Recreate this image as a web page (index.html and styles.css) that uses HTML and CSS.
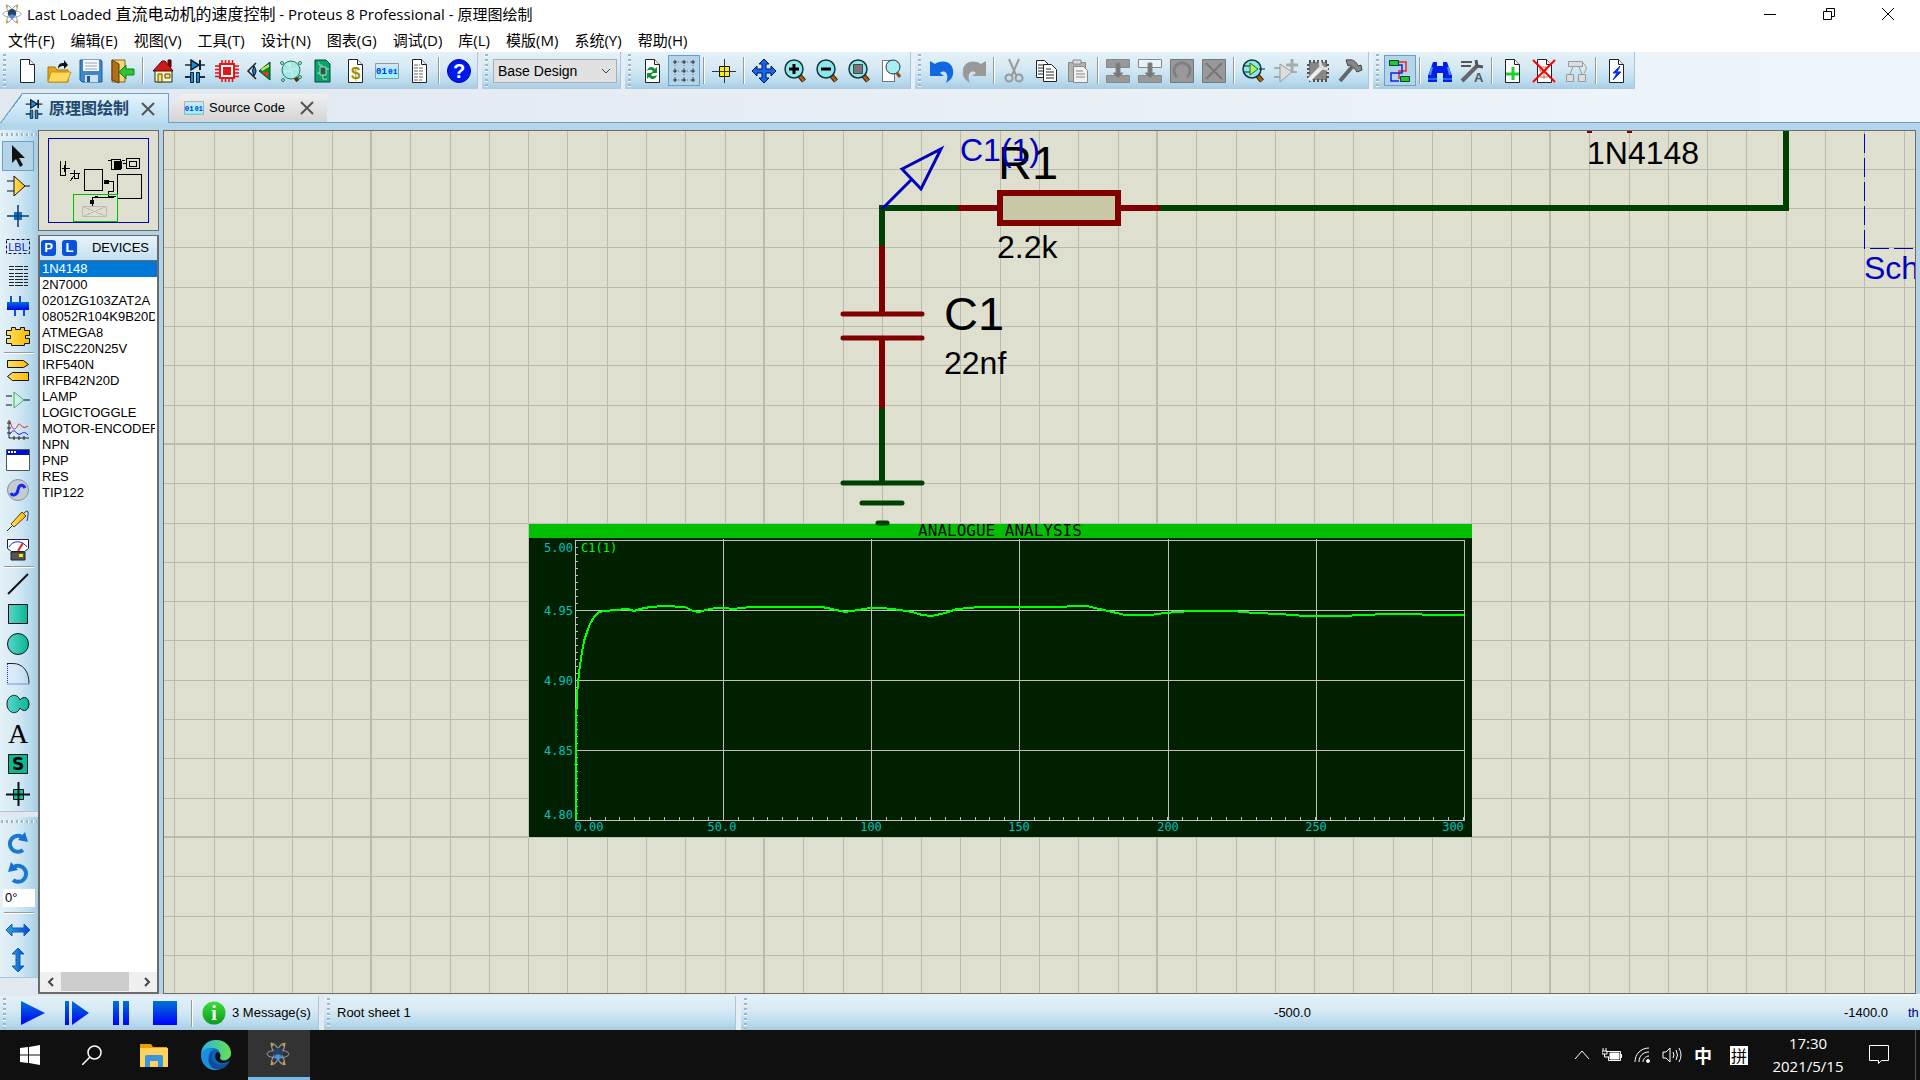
FILE: index.html
```html
<!DOCTYPE html>
<html lang="zh-CN">
<head>
<meta charset="utf-8">
<title>Last Loaded 直流电动机的速度控制 - Proteus 8 Professional - 原理图绘制</title>
<link rel="stylesheet" href="styles.css">
</head>
<body>
<svg class="defs" aria-hidden="true">
  <defs>
    <linearGradient id="blue" x1="0" x2="0" y1="0" y2="1"><stop offset="0" stop-color="#0074d0"/><stop offset="1" stop-color="#0000ff"/></linearGradient>
    <linearGradient id="blueH"><stop offset="0" stop-color="#2aa5e0"/><stop offset="1" stop-color="#0048e0"/></linearGradient>
    <linearGradient id="teal"><stop offset="0" stop-color="#5cd4cc"/><stop offset="1" stop-color="#04b894"/></linearGradient>
    <linearGradient id="gold"><stop offset="0" stop-color="#ffdf60"/><stop offset="1" stop-color="#ffb800"/></linearGradient>
    <linearGradient id="edgeGreen"><stop offset="0" stop-color="#24b4e8"/><stop offset="1" stop-color="#6be04e"/></linearGradient>
    <linearGradient id="info" x1="0" x2="0" y1="0" y2="1"><stop offset="0" stop-color="#3be03b"/><stop offset="1" stop-color="#0a9a1c"/></linearGradient>
    <symbol id="page" viewBox="0 0 24 24"><path d="M5.500 .5h9l5 5v18h-14z" fill="#fff" stroke="#222"/><path d="M14.500 .5v5h5" fill="#eee" stroke="#222"/></symbol>
    <symbol id="schem" viewBox="0 0 24 24"><path d="M2 6h20" stroke="#1a2e40" stroke-width="1.500"/><path d="M8 1v10l8-5z" fill="#1590e0" stroke="#10202c" stroke-width="1.500"/><path d="M17 1v10" stroke="#10202c" stroke-width="2"/><path d="M2 18h6M16 18h6" stroke="#1a2e40" stroke-width="2"/><path d="M7.500 13.500h3v10h-3zM13.500 13.500h3v10h-3z" fill="#1590e0" stroke="#10202c"/></symbol>
    <symbol id="code" viewBox="0 0 24 24"><path d="M.5 4.500h23v15H.5z" fill="#9af6fc" stroke="#8a9aa6"/><path d="M1 5h22v3H1z" fill="#d9e2ee"/><text x="1" y="15" class="bits">01</text><text x="13" y="15" class="bits small">01</text></symbol>
    <symbol id="mag" viewBox="0 0 24 24"><path d="M15 16l5 6" stroke="#2a1600" stroke-width="5"/><path d="M15 16l5 6" stroke="#b06010" stroke-width="3"/><circle cx="10" cy="10" r="9" fill="#8ce8ea" stroke="#16343a" stroke-width="1.500"/></symbol>
    <symbol id="atom" viewBox="0 0 24 24"><g fill="none" stroke="#8f9aa3" stroke-width="1"><ellipse cx="12" cy="12" rx="3" ry="12" transform="rotate(30 12 12)"/><ellipse cx="12" cy="12" rx="3" ry="12" transform="rotate(-30 12 12)"/><ellipse cx="12" cy="12" rx="11" ry="4"/></g><circle cx="12" cy="11" r="5" fill="#26425f"/><path d="M8 14l4 5 4-5-4-2z" fill="#4b8de8"/><path d="M5 1l2 3M19 1l-2 3M5 23l2-3M19 23l-2-3" stroke="#d59c3a" stroke-width="2"/></symbol>
    <symbol id="cross" viewBox="0 0 16 16"><path d="M2 2l12 12M14 2L2 14" stroke="#555" stroke-width="2"/></symbol>
    <symbol id="undo" viewBox="0 0 24 24"><path d="M0 2l5 3c8-5 17-2 18 6 1 6-2 10-7 13 2-5 2-9-1-11-2-1-4 0-5 1l4 3H0z"/></symbol>
    <symbol id="turn" viewBox="0 0 24 24"><path d="M17 19a8 8 0 1 1-1-13" fill="none" stroke="#1a78d0" stroke-width="4"/><path d="M19 1l3 10-10-2z" fill="#1670d8"/></symbol>
  </defs>
</svg>

<header class="titlebar">
  <svg class="app-icon"><use href="#atom"/></svg>
  <h1>Last Loaded <span class="han">直流电动机的速度控制</span> - Proteus 8 Professional - 原理图绘制</h1>
  <div class="win-buttons">
    <button aria-label="Minimize"><svg viewBox="0 0 12 12"><path d="M0 6.500h12"/></svg></button>
    <button aria-label="Restore"><svg viewBox="0 0 12 12"><path d="M.5 3.500h8v8h-8zM3.500 3V.5h8v8H9"/></svg></button>
    <button aria-label="Close"><svg viewBox="0 0 12 12"><path d="M0 0l12 12M12 0L0 12"/></svg></button>
  </div>
</header>

<nav class="menu">
  <button>文件(F)</button><button>编辑(E)</button><button>视图(V)</button><button>工具(T)</button><button>设计(N)</button><button>图表(G)</button><button>调试(D)</button><button>库(L)</button><button>模版(M)</button><button>系统(Y)</button><button>帮助(H)</button>
</nav>

<div class="toolbars">
  <div class="bar">
    <button aria-label="New"><svg><use href="#page"/></svg></button>
    <button aria-label="Open"><svg viewBox="0 0 24 24"><path d="M1 8h7l2 3h11v12H1z" fill="#e8a820" stroke="#a87400"/><path d="M4 13h20l-4 10H1z" fill="#ffd75a" stroke="#c89010"/><path d="M11 10c0-5 2-6 6-6V1l4 5-4 4V7c-3 0-4 0-6 3z" fill="#111"/></svg></button>
    <button aria-label="Save"><svg viewBox="0 0 24 24"><path d="M1 1h21l1 2v20H3l-2-2z" fill="#3f87c8" stroke="#1f5a94"/><path d="M4 1h16v11H4z" fill="#f4f8fa"/><path d="M6 4h12M6 7h12M6 10h12" stroke="#9ab"/><path d="M6 16h13v7H6z" fill="#cfe0ee"/><path d="M8 17h3v6H8z" fill="#1f5a94"/></svg></button>
    <button aria-label="Exit"><svg viewBox="0 0 24 24"><path d="M1 1h13v22H1z" fill="#f3d67c" stroke="#8a6010"/><path d="M1 1l7 4v19l-7-3z" fill="#b0701a" stroke="#5c3a08"/><path d="M8 13l7-7v4h8v6h-8v4z" fill="#2fc432" stroke="#158018"/></svg></button>
    <span class="sep"></span>
    <button aria-label="Home"><svg viewBox="0 0 24 24"><path d="M4 11h17v12H4z" fill="#fff8c0" stroke="#222"/><path d="M17 1h3v7h-3z" fill="#800" stroke="#400"/><path d="M2 12L11 2h3l8 10z" fill="#d01818" stroke="#600"/><path d="M7 15h4v8H7z" fill="#ffe838" stroke="#444"/><path d="M14 15h5v4h-5z" fill="#ffe838" stroke="#444"/></svg></button>
    <button aria-label="Schematic"><svg><use href="#schem"/></svg></button>
    <button aria-label="PCB layout"><svg viewBox="0 0 24 24"><path d="M7 1v22M10.500 1v22M14 1v22M17.500 1v22M0 7h24M0 10.500h24M0 14h24M0 17.500h24" stroke="#e01010" stroke-width="1.500"/><path d="M4 4h16v16H4z" fill="#e81818"/><path d="M6 6h12v12H6z" fill="#fff"/><path d="M8 8h8v8H8z" fill="#e01818"/></svg></button>
    <button aria-label="3D view"><svg viewBox="0 0 24 24"><path d="M9 4L1 12l8 8" fill="none" stroke="#222" stroke-width="1.500"/><path d="M7 7q4 5 0 10-3-5 0-10z" fill="#1480d0" stroke="#111"/><path d="M12 12L23 3v18z" fill="#0d8a30" stroke="#043"/><path d="M14 10l8-5v3l-7 4z" fill="#c8e840"/><path d="M15 13l6 5v-5z" fill="#f03020"/></svg></button>
    <button aria-label="Gerber"><svg viewBox="0 0 24 24"><path d="M15 17l4 5" stroke="#603008" stroke-width="4"/><circle cx="12" cy="11" r="9" fill="#a8e6e8" stroke="#168058"/><path d="M11 3v7h9M5 12h8v6M7 6h4" fill="none" stroke="#c8f4f4"/><g fill="none" stroke="#16845c"><circle cx="3" cy="4" r="1.500"/><circle cx="21" cy="4" r="1.500"/><circle cx="4" cy="21" r="1.500"/><circle cx="21" cy="18" r="1.500"/></g></svg></button>
    <button aria-label="Design explorer"><svg viewBox="0 0 24 24"><path d="M4 1h11l4 4v18H4z" fill="#08a468" stroke="#044"/><path d="M9 8h6v8H9zM8 3v3h3v2M16 20h-4v-4M15 10h3M6 14h3" fill="#2a584e" stroke="#9fe8c8"/></svg></button>
    <button aria-label="Bill of materials"><svg viewBox="0 0 24 24"><use href="#page"/><text x="8" y="20" class="dollar">$</text></svg></button>
    <button aria-label="Source code"><svg><use href="#code"/></svg></button>
    <button aria-label="Project notes"><svg viewBox="0 0 24 24"><use href="#page"/><path d="M7 6h6M7 9h10M7 12h10M7 15h10M7 18h10M7 21h8" stroke="#666" stroke-dasharray="4 1"/></svg></button>
    <span class="sep"></span>
    <button aria-label="Help"><svg viewBox="0 0 24 24"><circle cx="12" cy="12" r="11.500" fill="#0018f0" stroke="#0008a0"/><text x="12" y="19" class="help-mark">?</text></svg></button>
  </div>
  <div class="bar bar-combo">
    <select aria-label="Design variant"><option>Base Design</option></select>
  </div>
  <div class="bar">
    <button aria-label="Redraw"><svg viewBox="0 0 24 24"><use href="#page"/><path d="M7 12c1-5 6-5 8-2l2-2v6h-6l2-2c-2-2-4-1-6 0zM17 16c-1 5-6 5-8 2l-2 2v-6h6l-2 2c2 2 4 1 6 0z" fill="#0f9038"/></svg></button>
    <button class="on" aria-label="Grid"><svg viewBox="0 0 24 24"><path d="M3 3h18M3 12h18M3 21h18M3 3v18M12 3v18M21 3v18" stroke="#666" stroke-dasharray="1 2"/><path d="M1 3h4M10 3h4M19 3h4M1 12h4M10 12h4M19 12h4M1 21h4M10 21h4M19 21h4M3 1v4M3 10v4M3 19v4M12 1v4M12 10v4M12 19v4M21 1v4M21 10v4M21 19v4" stroke="#333"/></svg></button>
    <span class="sep"></span>
    <button aria-label="Origin"><svg viewBox="0 0 24 24"><path d="M7.500 7.500h10v10h-10z" fill="#ffee10" stroke="#111"/><path d="M12.500 0v24M0 12.500h24" stroke="#333"/></svg></button>
    <span class="sep"></span>
    <button aria-label="Pan"><svg viewBox="0 0 24 24"><path d="M12 0l5 5h-3v5h5V7l5 5-5 5v-3h-5v5h3l-5 5-5-5h3v-5H5v3l-5-5 5-5v3h5V5H7z" fill="#1068f0" stroke="#001450"/></svg></button>
    <button aria-label="Zoom in"><svg viewBox="0 0 24 24"><use href="#mag"/><path d="M10 5v10M5 10h10" stroke="#000" stroke-width="3"/></svg></button>
    <button aria-label="Zoom out"><svg viewBox="0 0 24 24"><use href="#mag"/><path d="M5 10h10" stroke="#000" stroke-width="3"/></svg></button>
    <button aria-label="Zoom all"><svg viewBox="0 0 24 24"><use href="#mag"/><path d="M5.500 5.500h9v9h-9z" fill="#777" stroke="#445"/></svg></button>
    <button aria-label="Zoom area"><svg viewBox="0 0 24 24"><path d="M2.500 1.500h12v21h-12z" fill="#fff" stroke="#000" stroke-dasharray="1 1"/><path d="M17 14l3 4" stroke="#8a4a10" stroke-width="3"/><circle cx="13" cy="8" r="7" fill="#a8eef0" stroke="#234"/></svg></button>
  </div>
  <div class="bar">
    <button aria-label="Undo"><svg fill="#1268e0"><use href="#undo"/></svg></button>
    <button aria-label="Redo"><svg class="flip" fill="#999"><use href="#undo"/></svg></button>
    <span class="sep"></span>
    <button aria-label="Cut"><svg viewBox="0 0 24 24" fill="none" stroke="#999"><path d="M7 0l7 16M17 0l-7 16" stroke-width="2"/><circle cx="7" cy="19" r="3.500" stroke-width="2"/><circle cx="17" cy="19" r="3.500" stroke-width="2"/></svg></button>
    <button aria-label="Copy"><svg viewBox="0 0 24 24" fill="#fff" stroke="#222"><path d="M2.500 1.500h8l4 4v13h-12z"/><path d="M4 6h5M4 9h6M4 12h6M4 15h6"/><path d="M9.500 5.500h8l5 5v12h-13z"/><path d="M12 10h5M12 13h8M12 16h8M12 19h8"/></svg></button>
    <button aria-label="Paste"><svg viewBox="0 0 24 24" stroke="#888"><path d="M2.500 3.500h17v19h-17z" fill="#b4b4b4"/><path d="M7 1h8v4H7z" fill="#ddd"/><path d="M7.500 7.500h10l4 4v12h-14z" fill="#f0f0f0"/><path d="M10 12h7M10 15h9M10 18h9"/></svg></button>
    <span class="sep"></span>
    <button aria-label="Block copy"><svg viewBox="0 0 24 24" fill="#999" stroke="#888"><path d="M.5.500h23v8H.5zM.5 16.500h23v7H.5z"/><path d="M10 4h4v10h3l-5 5-5-5h3z" fill="#777"/></svg></button>
    <button aria-label="Block move"><svg viewBox="0 0 24 24" fill="#999" stroke="#888"><path d="M.5.500h23v8H.5z" fill="#e8f2f8"/><path d="M.5 16.500h23v7H.5z"/><path d="M10 4h4v10h3l-5 5-5-5h3z" fill="#777"/></svg></button>
    <button aria-label="Block rotate"><svg viewBox="0 0 24 24"><path d="M.5.500h23v23H.5z" fill="#999" stroke="#777"/><path d="M7 18a8 8 0 1 1 10 0" fill="none" stroke="#808080" stroke-width="3"/></svg></button>
    <button aria-label="Block delete"><svg viewBox="0 0 24 24"><path d="M.5.500h23v23H.5z" fill="#999" stroke="#777"/><path d="M4 4l16 16M20 4L4 20" stroke="#777" stroke-width="2"/></svg></button>
    <span class="sep"></span>
    <button aria-label="Pick parts"><svg viewBox="0 0 24 24"><use href="#mag"/><path d="M1 7h7M1 13h7M17 10h6" stroke="#123"/><path d="M8 4v12l8-6z" fill="#b0f060" stroke="#187018"/></svg></button>
    <button aria-label="Make device"><svg viewBox="0 0 24 24"><path d="M0 9h6M0 18h6M18 13h5" stroke="#777"/><path d="M6 5v18l12-10z" fill="#ddd" stroke="#999"/><path d="M18 0v12M12 6h12" stroke="#aaa" stroke-width="3"/></svg></button>
    <button aria-label="Packaging tool"><svg viewBox="0 0 24 24"><path d="M3 3h18v18H3z" fill="#888" stroke="#555" stroke-width="4" stroke-dasharray="2 2"/><path d="M4 4h16v16H4z" fill="#888"/><path d="M3 21L17 7" stroke="#eee" stroke-width="4"/><path d="M14 2l1 7 7 1" fill="none" stroke="#ddd" stroke-width="3"/></svg></button>
    <button aria-label="Decompose"><svg viewBox="0 0 24 24"><path d="M2 22L14 8" stroke="#666" stroke-width="4"/><path d="M8 1c7-1 10 1 12 6l3-1 1 5-5 2-2-3-5-4-2 1z" fill="#888" stroke="#444"/></svg></button>
  </div>
  <div class="bar">
    <button class="on" aria-label="Wire autorouter"><svg viewBox="0 0 24 24" fill="none"><path d="M10 3h8v9h-7v8" stroke="#f02020" stroke-width="1.500"/><path d="M9 6h5v8H3v8h8" stroke="#1020f0" stroke-width="1.500"/><path d="M1.500 1.500h9v5h-9zM12.500 17.500h9v5h-9z" fill="#22c832" stroke="#043"/></svg></button>
    <span class="sep"></span>
    <button aria-label="Search"><svg viewBox="0 0 24 24"><path d="M5 3h4v4h6V3h4l5 14v6h-9v-9H9v9H0v-6z" fill="#0020e8"/><path d="M4 8l-2 8M20 8l2 8" stroke="#4c90ff" stroke-width="2"/><path d="M0 20h9M15 20h9" stroke="#40b8f8"/></svg></button>
    <button aria-label="Property assignment"><svg viewBox="0 0 24 24"><path d="M1 3h11M1 7h10" stroke="#555" stroke-width="2"/><path d="M2 22L18 6" stroke="#666" stroke-width="4"/><path d="M16 1l1 6 6 1" fill="none" stroke="#555" stroke-width="3"/><text x="14" y="23" class="letter-a">A</text></svg></button>
    <span class="sep"></span>
    <button aria-label="New sheet"><svg viewBox="0 0 24 24"><use href="#page"/><path d="M13 8v13M6 15h13" stroke="#20d030" stroke-width="3"/></svg></button>
    <button aria-label="Remove sheet"><svg viewBox="0 0 24 24"><use href="#page"/><path d="M8 8h6v4H8zM12 12v8M8 18h8" fill="none" stroke="#a87858"/><path d="M1 1l22 22M23 1L1 23" stroke="#f00" stroke-width="2"/></svg></button>
    <button aria-label="Exit to parent"><svg viewBox="0 0 24 24" fill="#ddd" stroke="#999"><path d="M4.500 2.500h14v5h-14zM2.500 15.500h7v7h-7zM14.500 15.500h7v7h-7z"/><path d="M9 8l-3 7M15 8l3 7M19 4c4 3 4 7 1 10" fill="none"/></svg></button>
    <span class="sep"></span>
    <button aria-label="Electrical check"><svg viewBox="0 0 24 24"><use href="#page"/><path d="M16 7l-7 7h4l-4 7 8-8h-4z" fill="#1030f0" stroke="#1030f0"/></svg></button>
  </div>
</div>

<div class="tabs">
  <div class="tab active"><svg class="tab-icon"><use href="#schem"/></svg><a href="#sheet">原理图绘制</a><button aria-label="Close tab"><svg><use href="#cross"/></svg></button></div>
  <div class="tab"><svg class="tab-icon"><use href="#code"/></svg><a href="#source">Source Code</a><button aria-label="Close tab"><svg><use href="#cross"/></svg></button></div>
</div>

<main class="work">
  <aside class="modes">
    <div class="mode-group">
      <button class="on" aria-label="Selection"><svg viewBox="0 0 24 24"><path d="M6 1v18l4-4 4 8 3-2-4-7h6z" fill="#111"/></svg></button>
      <button aria-label="Component"><svg viewBox="0 0 24 24"><path d="M1 7h8M1 17h8M18 12h6" stroke="#111"/><path d="M8 2v20l11-10z" fill="url(#gold)" stroke="#111"/></svg></button>
      <button aria-label="Junction"><svg viewBox="0 0 24 24"><path d="M8 8h8v8H8z" fill="#0874d8"/><path d="M12 1v22M1 12h22" stroke="#123c58" stroke-width="1.500"/></svg></button>
      <button aria-label="Wire label"><svg viewBox="0 0 24 24"><path d="M.5 5.500h23v14H.5z" fill="none" stroke="#111" stroke-dasharray="3 2"/><text x="12" y="17" class="lbl">LBL</text></svg></button>
      <button aria-label="Text script"><svg viewBox="0 0 24 24" shape-rendering="crispEdges"><path d="M3 2.500h19M3 5.500h19M3 9.500h19M3 12.500h19M3 15.500h19M3 18.500h19M3 21.500h19" stroke="#222" stroke-dasharray="5 1 8 1"/></svg></button>
      <button aria-label="Bus"><svg viewBox="0 0 24 24"><path d="M5 2v6M14 2v6M9 16v6M18 16v6" stroke="#0a50e0" stroke-width="2"/><path d="M1 8h22v8H1z" fill="url(#blue)"/></svg></button>
      <button aria-label="Subcircuit"><svg viewBox="0 0 24 24"><path d="M5.500 3.500h4v2h5v-2h4v3h5v5h-4v3h4v5h-5v2h-13v-2h-5v-5h4v-3h-4v-5h5z" fill="url(#gold)" stroke="#111"/></svg></button>
      <span class="rule"></span>
      <button aria-label="Terminals"><svg viewBox="0 0 24 24"><path d="M1.500 2.500h16l5 4-5 3h-16zM22.500 14.500h-16l-5 4 5 4h16z" fill="url(#gold)" stroke="#111"/></svg></button>
      <button aria-label="Device pins"><svg viewBox="0 0 24 24"><path d="M0 8h6M0 17h6M18 12h6" stroke="#111"/><path d="M8 4v16l10-8z" fill="none" stroke="#30c040"/></svg></button>
      <button aria-label="Graph"><svg viewBox="0 0 24 24" fill="none"><path d="M3 2v18h20M1 5h4M1 10h4M1 15h4M8 18v4M13 18v4M18 18v4" stroke="#222"/><path d="M4 3c3 12 6 8 8 4s4 6 10 1" stroke="#e02020"/><path d="M4 16c4-6 5-2 8 0s5-5 10 1" stroke="#1020f0"/></svg></button>
      <button aria-label="Active popup"><svg viewBox="0 0 24 24"><path d="M.5 1.500h23v21H.5z" fill="#fff" stroke="#555"/><path d="M1 2h22v5H1z" fill="#0010c8"/><path d="M2 4h8" stroke="#fff" stroke-width="2" stroke-dasharray="2 1"/></svg></button>
      <button aria-label="Generator"><svg viewBox="0 0 24 24"><circle cx="12" cy="12" r="10.500" fill="#c4ccd2" stroke="#8a9298"/><path d="M5 15c1 3 6 3 7-3s5-6 7-2" fill="none" stroke="#1428f0" stroke-width="3"/></svg></button>
      <button aria-label="Probe"><svg viewBox="0 0 24 24"><path d="M1 23l5-5" stroke="#222"/><path d="M5 16L16 4l4 4L8 19z" fill="url(#gold)" stroke="#554010"/><path d="M18 5c6-6 4 3 3 8" fill="none" stroke="#333"/></svg></button>
      <button aria-label="Instruments"><svg viewBox="0 0 24 24"><path d="M1.500 1.500h21v9l-4 3h-13l-4-3z" fill="#fff" stroke="#222"/><path d="M3 9c4-7 13-7 18 0" fill="none" stroke="#1020f0"/><path d="M12 13l5-8" stroke="#e02020" stroke-width="2"/><path d="M5 14h14v8H5z" fill="#555" stroke="#222"/><path d="M13 16h4v3h-4z" fill="#f8e020"/></svg></button>
      <span class="rule"></span>
      <button aria-label="Line"><svg viewBox="0 0 24 24"><path d="M2 22L22 2" stroke="#111" stroke-width="2"/></svg></button>
      <button aria-label="Box"><svg viewBox="0 0 24 24"><path d="M2.500 2.500h19v19h-19z" fill="url(#teal)" stroke="#111"/></svg></button>
      <button aria-label="Circle"><svg viewBox="0 0 24 24"><circle cx="12" cy="12" r="10.500" fill="url(#teal)" stroke="#111"/></svg></button>
      <button aria-label="Arc"><svg viewBox="0 0 24 24" fill="none"><path d="M1.500 2v20H23" stroke="#2030e0" stroke-dasharray="1 1"/><path d="M1 1.500h6c10 0 16 8 16 20" stroke="#222"/></svg></button>
      <button aria-label="Path"><svg viewBox="0 0 24 24"><path d="M14 8c4-5 9-2 9 4s-5 9-9 4c-3 8-13 5-13-4s10-12 13-4z" fill="url(#teal)" stroke="#111"/></svg></button>
      <button aria-label="Text"><svg viewBox="0 0 24 24"><text x="12" y="21" class="big-a">A</text></svg></button>
      <button aria-label="Symbol"><svg viewBox="0 0 24 24"><path d="M2.500 2.500h19v19h-19z" fill="#08b890" stroke="#111"/><text x="12" y="18" class="big-s">S</text></svg></button>
      <button aria-label="Marker"><svg viewBox="0 0 24 24"><path d="M7.500 7.500h10v10h-10z" fill="#10c098" stroke="#111"/><path d="M12.500 0v24M0 12.500h24" stroke="#111" stroke-width="2"/></svg></button>
    </div>
    <div class="mode-group">
      <button aria-label="Rotate clockwise"><svg><use href="#turn"/></svg></button>
      <button aria-label="Rotate anticlockwise"><svg class="flip"><use href="#turn"/></svg></button>
      <input class="angle" aria-label="Angle" value="0°">
      <span class="rule"></span>
      <button aria-label="Mirror horizontally"><svg viewBox="0 0 24 24"><path d="M0 12l6-6v4h12V6l6 6-6 6v-4H6v4z" fill="url(#blueH)" stroke="#1860a0"/></svg></button>
      <button aria-label="Mirror vertically"><svg viewBox="0 0 24 24"><path d="M12 0l6 6h-4v12h4l-6 6-6-6h4V6H6z" fill="url(#blueH)" stroke="#1860a0"/></svg></button>
    </div>
  </aside>

  <aside class="side">
    <div class="overview">
      <svg viewBox="39 131 119 99" fill="none" shape-rendering="crispEdges">
        <path d="M48.500 138.500h100v84h-100z" stroke="#0000c0"/>
        <g stroke="#000">
          <path d="M84.500 169.500h18v21h-18zM117 174h24v24h-24zM126.500 158.500h13v10h-13zM129.500 161.500h7v5h-7zM111.500 159.500h9v10h-9z"/>
          <path d="M114 161h7v7h-7zM104 180h4v3h-4zM90 200h3v3h-3z" fill="#000"/>
          <path d="M60.500 161v14h5v-14M62 168h8M64 165v7M70 173h10M74 170v8h4v-4M70 181l4-5M108 160h3M122 160h3M123 163h3M108 181h5v10h-5v5h8M92 206v-9h22M95 196h3"/>
        </g>
        <path d="M82.500 206.500h24v10h-24zl24 10m0-10l-24 10" stroke="#bbb"/>
        <path d="M73.500 194.500h44v27h-44z" stroke="#00c000"/>
      </svg>
    </div>
    <section class="devices">
      <div class="devices-head"><button>P</button><button>L</button><h2>DEVICES</h2></div>
      <ul>
        <li class="selected">1N4148</li><li>2N7000</li><li>0201ZG103ZAT2A</li><li>08052R104K9B20D</li><li>ATMEGA8</li><li>DISC220N25V</li><li>IRF540N</li><li>IRFB42N20D</li><li>LAMP</li><li>LOGICTOGGLE</li><li>MOTOR-ENCODER</li><li>NPN</li><li>PNP</li><li>RES</li><li>TIP122</li>
      </ul>
      <div class="scroll">
        <button aria-label="Scroll left"><svg viewBox="0 0 8 12"><path d="M6 2L2 6l4 4"/></svg></button>
        <span class="track"><span class="thumb"></span></span>
        <button aria-label="Scroll right"><svg viewBox="0 0 8 12"><path d="M2 2l4 4-4 4"/></svg></button>
      </div>
    </section>
  </aside>

  <section class="sheet" id="sheet">
    <svg class="drawing">
      <defs>
        <pattern id="grid" x="764" y="444" width="393" height="393" patternUnits="userSpaceOnUse">
          <path d="M39 0h1v393h-1zM79 0h1v393h-1zM118 0h1v393h-1zM157 0h1v393h-1zM196 0h1v393h-1zM236 0h1v393h-1zM275 0h1v393h-1zM314 0h1v393h-1zM354 0h1v393h-1zM0 0h1v393H0zM392 0h1v393h-1z" fill="#bbbbad"/>
          <path d="M0 39h393v1H0zM0 79h393v1H0zM0 118h393v1H0zM0 157h393v1H0zM0 196h393v1H0zM0 236h393v1H0zM0 275h393v1H0zM0 314h393v1H0zM0 354h393v1H0zM0 0h393v1H0zM0 392h393v1H0z" fill="#bbbbad"/>
        </pattern>
        <pattern id="yticks" x="576" y="540" width="2" height="7" patternUnits="userSpaceOnUse"><path d="M0 0h2v1H0z" fill="#c0c0c0"/></pattern>
      </defs>
      <g transform="translate(-164 -131)">
        <rect x="0" y="0" width="4000" height="3000" fill="url(#grid)"/>
        <g fill="none" stroke-width="6" shape-rendering="crispEdges">
          <path d="M961 208H882V248M882 407V483M1160 208H1786V100" stroke="#004000"/>
          <path d="M958 208H997M1121 208H1160M882 246V314M882 338V408M1587 130h5M1627 130h5" stroke="#800000"/>
          <path d="M1000 193h118v30h-118z" fill="#c8c8a8" stroke="#800000"/>
        </g>
        <g fill="none" stroke-width="5" stroke-linecap="round">
          <path d="M843 314h79M843 338h79" stroke="#800000"/>
          <path d="M843 483h79M862 503h40" stroke="#004000"/>
        </g>
        <path d="M882 209L911 180M902 169L941 149L921 189Z" fill="none" stroke="#0000c0" stroke-width="3"/>
        <path d="M1864 134V249M1870 248H1920" fill="none" stroke="#0000c0" stroke-dasharray="19 5" shape-rendering="crispEdges"/>
        <text class="ref" x="998" y="179">R1</text>
        <text class="val probe" x="960" y="161">C1(1)</text>
        <text class="val" x="997" y="258">2.2k</text>
        <text class="ref" x="944" y="330">C1</text>
        <text class="val" x="944" y="374">22nf</text>
        <text class="val" x="1587" y="164">1N4148</text>
        <text class="val probe" x="1864" y="279">Sch</text>

        <g shape-rendering="crispEdges">
          <path d="M528 523h944v315H528z" fill="#c0c0c0"/>
          <path d="M529 524h943v14H529z" fill="#00c000"/>
          <path d="M529 538h943v299H529z" fill="#002000"/>
          <path d="M576 541h2v279h-2z" fill="url(#yticks)"/>
          <path d="M575 818.500H1464" fill="none" stroke="#c0c0c0" stroke-width="3" stroke-dasharray="1 13.800"/>
          <path d="M575.500 540.500h889v280h-889zM723.500 539v281M871.500 539v281M1019.500 539v281M1168.500 539v281M1316.500 539v281M576 610.500h888M576 680.500h888M576 750.500h888" fill="none" stroke="#c0c0c0"/>
        </g>
        <path d="M878 523h9" stroke="#004000" stroke-width="5" stroke-linecap="round"/>
        <path d="M575.500 820V765L576 720 577 697 578 682 580 665 582 652 584 641 587 632 590 624 594 617 599 612 605 611 615 610 628 609 634 611 640 609 650 607 665 606 685 607 693 611 699 612 706 610 715 608 725 608 733 609 742 608 750 607H822L832 609 845 612 858 610 870 608H883L900 610 912 612 922 615 932 616 945 613 957 609 980 607H1060L1075 606 1087 606 1095 608 1108 611 1125 615H1150L1165 613 1190 611H1232L1255 613 1280 614 1305 616H1345L1360 615 1390 614H1413L1430 615H1464" fill="none" stroke="#00ff00" stroke-width="2" shape-rendering="crispEdges"/>
        <text class="chart-title" x="1000" y="536">ANALOGUE ANALYSIS</text>
        <text class="axis trace" x="581" y="552">C1(1)</text>
        <g class="axis ylab"><text x="573" y="552">5.00</text><text x="573" y="615">4.95</text><text x="573" y="685">4.90</text><text x="573" y="755">4.85</text><text x="573" y="819">4.80</text></g>
        <g class="axis xlab"><text x="589" y="831">0.00</text><text x="722" y="831">50.0</text><text x="871" y="831">100</text><text x="1019" y="831">150</text><text x="1168" y="831">200</text><text x="1316" y="831">250</text><text x="1453" y="831">300</text></g>
      </g>
    </svg>
  </section>
</main>

<footer class="status">
  <div class="pane controls">
    <button aria-label="Play"><svg viewBox="0 0 24 24"><path d="M0 0l24 12L0 24z" fill="url(#blue)"/></svg></button>
    <button aria-label="Step"><svg viewBox="0 0 24 24"><path d="M0 0h4v24H0zM7 0l17 12L7 24z" fill="url(#blue)"/></svg></button>
    <button aria-label="Pause"><svg viewBox="0 0 24 24"><path d="M4 0h6v24H4zM14 0h6v24h-6z" fill="url(#blue)"/></svg></button>
    <button aria-label="Stop"><svg viewBox="0 0 24 24"><path d="M0 0h24v24H0z" fill="url(#blue)"/></svg></button>
    <span class="sep"></span>
    <svg class="info" viewBox="0 0 24 24"><circle cx="12" cy="12" r="11.500" fill="url(#info)"/><text x="12" y="19" class="info-i">i</text></svg>
    <span>3 Message(s)</span>
  </div>
  <div class="pane root">Root sheet 1</div>
  <div class="pane coords"><span class="cx">-500.0</span><span class="cy">-1400.0</span><span class="unit">th</span></div>
</footer>

<div class="taskbar">
  <button aria-label="Start"><svg viewBox="0 0 20 20" fill="#fff"><path d="M0 3l8-1v7.500H0zM9 2l11-2v9.500H9zM0 10.500h8V18l-8-1zM9 10.500h11V20L9 18z"/></svg></button>
  <button aria-label="Search"><svg viewBox="0 0 20 20" fill="none" stroke="#fff" stroke-width="1.500"><circle cx="12.500" cy="7.500" r="6.500"/><path d="M8 12l-8 8"/></svg></button>
  <button aria-label="File Explorer"><svg class="wide" viewBox="0 0 30 30"><path d="M1 4h11l2 3h14v6H1z" fill="#e8a000"/><path d="M1 8h28v19H1z" fill="#ffd25e"/><path d="M6 27V17q0-2 2-2h14q2 0 2 2v10h-5v-6h-8v6z" fill="#3a95dc"/></svg></button>
  <button aria-label="Edge"><svg class="wide" viewBox="0 0 30 30"><circle cx="15" cy="15" r="15" fill="#0c64bc"/><path d="M0 14C1 4 8 0 15 0c9 0 15 6 15 13 0 5-4 8-9 7-3-1-3-2-2-4 1-4-2-8-8-8-5 0-9 2-11 6z" fill="url(#edgeGreen)"/><path d="M0 14c2-5 9-7 13-5-5 2-6 7-5 11 1 6 6 9 11 9C8 33-1 24 0 14z" fill="#1a8fe0"/><path d="M13 11c-6 7 0 18 14 12-3 5-8 7-12 6-8-1-11-13-2-18z" fill="#134c94"/><path d="M16 12c4 1 4 4 3 6 1 4 7 4 11-2v4c-2 2-5 3-9 3-6 0-9-7-5-11z" fill="#101010"/></svg></button>
  <button class="running" aria-label="Proteus"><svg class="wide"><use href="#atom"/></svg></button>
  <div class="tray">
    <svg class="t16" viewBox="0 0 16 16"><path d="M1 12l7-8 7 8"/></svg>
    <svg class="t20" viewBox="0 0 20 16"><path d="M4.500 4.500h14v9h-12v-4M19.500 7v4M1 1v3M4 1v3M0 4h5v3H0zM2.500 7v3h4"/><path d="M8 6h9v6H8z" fill="#fff"/></svg>
    <svg class="t16" viewBox="0 0 16 16"><path d="M1 15C1 7 7 1 15 1M5 15C5 9 9 5 15 5M9 15c0-3 3-6 6-6"/><circle cx="14" cy="14" r="1.500" fill="#fff"/></svg>
    <svg class="t20" viewBox="0 0 20 16"><path d="M1 5h3l4-4v14l-4-4H1zM11 5q2 3 0 6M14 3q3 5 0 10M17 1q4 7 0 14"/></svg>
    <span class="ime">中</span>
    <span class="ime-box">拼</span>
    <div class="clock"><time>17:30</time><time>2021/5/15</time></div>
    <svg class="t20" viewBox="0 0 20 20"><path d="M.5.500h19v15h-7l-3 3v-3h-9z"/></svg>
    <span class="peek"></span>
  </div>
</div>
</body>
</html>
```
FILE: styles.css
```css
* { box-sizing: border-box; }

body {
  margin: 0;
  min-height: 100vh;
  display: flex;
  flex-direction: column;
  overflow: hidden;
  background: linear-gradient(90deg, #e1e8ef, #eef5fb);
  color: #000;
  font: 13px/16px "Liberation Sans", "Noto Sans CJK SC", sans-serif;
}

button {
  margin: 0;
  padding: 0;
  border: 0;
  background: none;
  color: inherit;
  font: inherit;
  display: flex;
  align-items: center;
  justify-content: center;
}

h1, h2, ul { margin: 0; padding: 0; font: inherit; list-style: none; }
a { color: inherit; text-decoration: none; }
svg { display: block; flex: none; }
.defs { position: absolute; width: 0; height: 0; }
.flip { transform: scaleX(-1); }

/* Title bar and menu */
.titlebar {
  display: flex;
  align-items: center;
  height: 28px;
  padding: 0 3px 0 2px;
  gap: 5px;
  background: #fff;
  font: 15px/28px "Open Sans", "Noto Sans CJK SC", sans-serif;
}
.app-icon { width: 20px; height: 22px; }
.titlebar h1 { flex: 1; white-space: nowrap; }
.han { font-size: 16px; }
.win-buttons { display: flex; }
.win-buttons button { width: 59px; height: 28px; }
.win-buttons svg { width: 12px; height: 12px; fill: none; stroke: #000; }

.menu {
  display: flex;
  height: 24px;
  background: #fff;
  font: 15px/24px "Open Sans", "Noto Sans CJK SC", sans-serif;
}
.menu button { padding: 0 8px; white-space: nowrap; line-height: 24px; }

/* Toolbars */
.toolbars { display: flex; gap: 4px; height: 37px; }
.bar {
  position: relative;
  display: flex;
  align-items: center;
  padding: 0 2px 0 11px;
  border-right: 1px solid #a9c6da;
  background: linear-gradient(#e4f1f8, #d5e9f4 45%, #b9dbee 80%, #aacbe0);
}
.bar::before, .pane::before {
  content: "";
  position: absolute;
  left: 3px;
  top: 2px;
  bottom: 1px;
  width: 3px;
  background: repeating-linear-gradient(#9fb6c6 0 2px, #f4fafd 2px 3px, transparent 3px 5px);
}
.bar button { width: 32px; height: 31px; }
.bar svg { width: 24px; height: 24px; overflow: visible; }
.bar .on, .mode-group .on { background: #b4d5e9; border: 1px solid #6d9fc2; }
.sep { width: 2px; height: 27px; margin: 0 3px; border-left: 1px solid #999; border-right: 1px solid #fff; }
.bar-combo { width: 139px; }
.bar-combo select {
  flex: 1;
  height: 24px;
  margin-right: 1px;
  padding: 0 4px;
  border: 1px solid #adadad;
  border-radius: 0;
  appearance: none;
  background: #e1e1e1 url("data:image/svg+xml,%3Csvg xmlns='http://www.w3.org/2000/svg' width='10' height='6'%3E%3Cpath d='M1 1l4 4 4-4' fill='none' stroke='%23444'/%3E%3C/svg%3E") no-repeat right 5px center;
  color: #000;
  font: 14px/20px "Liberation Sans", sans-serif;
}
.bits { font: bold 9px "Liberation Mono", monospace; fill: #1028e0; }
.bits.small { font-size: 8px; }
.dollar { font: bold 17px "Liberation Sans", sans-serif; fill: #a09000; }
.help-mark { font: bold 20px "Liberation Sans", sans-serif; fill: #fff; text-anchor: middle; }
.letter-a { font: bold 13px "Liberation Sans", sans-serif; fill: #555; }

/* Document tabs */
.tabs {
  display: flex;
  align-items: flex-end;
  height: 41px;
  border-bottom: 7px solid #b4d6eb;
  padding-top: 4px;
  box-shadow: inset 0 -1px #6d9fc2;
}
.tab {
  display: flex;
  align-items: center;
  width: 158px;
  height: 28px;
  margin-bottom: 1px;
  padding: 0 12px 0 15px;
  gap: 5px;
  background: linear-gradient(#f0f0f0, #d4d4d4);
  clip-path: polygon(13px 0, 100% 0, 100% 100%, 0 100%, 0 14px);
}
.tab-icon { width: 20px; height: 20px; }
.tab a { flex: 1; white-space: nowrap; }
.tab button svg { width: 16px; height: 16px; }
.tab.active {
  width: 169px;
  height: 30px;
  margin-bottom: 0;
  padding-left: 24px;
  border-top: 1px solid #6d9fc2;
  border-right: 1px solid #6d9fc2;
  background:
    linear-gradient(to bottom right, transparent calc(50% - 1px), #6d9fc2 calc(50% - 1px), #6d9fc2 calc(50% + 1px), transparent calc(50% + 1px)) left top / 22px 29px no-repeat,
    linear-gradient(#e6f3fb, #b9dcf1);
  clip-path: polygon(22px 0, 100% 0, 100% 100%, 0 100%);
  color: #24486c;
  font: bold 16px/20px "Noto Sans CJK SC", sans-serif;
}
.tab.active a { line-height: 20px; padding-bottom: 3px; }

/* Work area */
.work { flex: 1; display: flex; min-height: 0; padding-right: 4px; background: linear-gradient(90deg, #e1e8ef 38px, #b3d2e5 38px); }
.modes { width: 38px; display: flex; flex-direction: column; gap: 5px; }
.mode-group {
  position: relative;
  display: flex;
  flex-direction: column;
  padding: 11px 4px 2px 2px;
  border-bottom: 1px solid #a9c6da;
  background: linear-gradient(90deg, #e4f1f8, #d5e9f4 45%, #b9dbee 80%, #aacbe0);
}
.mode-group::before {
  content: "";
  position: absolute;
  top: 3px;
  left: 1px;
  right: 1px;
  height: 3px;
  background: repeating-linear-gradient(90deg, #9fb6c6 0 2px, #f4fafd 2px 3px, transparent 3px 5px);
}
.mode-group button { height: 30px; }
.mode-group svg { width: 24px; height: 24px; overflow: visible; }
.rule { height: 2px; margin: 1px 0 1px 2px; border-top: 1px solid #999; border-bottom: 1px solid #fff; }
.angle { width: 100%; height: 18px; margin: 1px 0 4px 1px; padding: 0 2px; border: 0; background: #fff; font: 13px/18px "Liberation Sans", sans-serif; }
.lbl { font: 11px "Liberation Sans", sans-serif; fill: #1020d0; text-anchor: middle; }
.big-a { font: 28px "Liberation Serif", serif; text-anchor: middle; }
.big-s { font: bold 17px "DejaVu Sans", sans-serif; text-anchor: middle; }

.side { width: 121px; display: flex; flex-direction: column; gap: 4px; }
.overview { border: 1px solid #6b6b6b; background: #dfdfd0; height: 101px; }
.overview svg { width: 119px; height: 99px; }
.devices { flex: 1; display: flex; flex-direction: column; border: 2px solid #6b6b6b; border-top-width: 1px; background: #fff; }
.devices-head {
  display: flex;
  align-items: center;
  height: 25px;
  padding: 0 8px 0 1px;
  gap: 6px;
  border-bottom: 1px solid #6b6b6b;
  background: linear-gradient(#e8f4fb, #c4e0f0);
}
.devices-head button { width: 15px; height: 16px; border-radius: 3px; background: #0852dc; color: #fff; font-weight: bold; }
.devices-head h2 { flex: 1; text-align: right; }
.devices ul { flex: 1; overflow: hidden; }
.devices li { height: 16px; margin-right: 2px; padding-left: 2px; line-height: 16px; white-space: nowrap; overflow: hidden; }
.devices .selected { margin-right: 0; background: #0078d7; color: #fff; }
.scroll { display: flex; height: 20px; padding-bottom: 1px; background: #f0f0f0; }
.scroll button { width: 21px; }
.scroll svg { width: 8px; height: 12px; fill: none; stroke: #444; stroke-width: 2; }
.track { flex: 1; display: flex; }
.thumb { width: 90%; background: #cdcdcd; }

.sheet { flex: 1; margin-left: 4px; border: 1px solid #6b6b6b; background: #dfdfd0; overflow: hidden; display: flex; }
.drawing { flex: 1; width: 100%; min-height: 0; }
.drawing text { font-family: "Liberation Sans", sans-serif; }
.ref { font-size: 47px; }
.val { font-size: 32px; }
.probe { fill: #0000c0; }
.drawing .axis, .drawing .axis text { font: 12px "DejaVu Sans Mono", monospace; fill: #00c0c0; }
.drawing .trace { fill: #00ff00; }
.ylab { text-anchor: end; }
.xlab { text-anchor: middle; }
.drawing .chart-title { font: 16px "DejaVu Sans Mono", monospace; text-anchor: middle; }

/* Status bar */
.status { display: flex; gap: 5px; height: 36px; padding-top: 2px; }
.pane {
  position: relative;
  display: flex;
  align-items: center;
  border-right: 1px solid #a9c6da;
  background: linear-gradient(#e4f1f8, #d5e9f4 45%, #b9dbee 80%, #aacbe0);
}
.controls { width: 319px; padding-left: 21px; }
.controls button { width: 24px; margin-right: 20px; }
.controls button svg, .info { width: 24px; height: 24px; }
.controls .sep { margin: 0 9px 0 -6px; }
.info { margin-right: 6px; }
.info-i { font: bold 20px "Liberation Serif", serif; fill: #fff; text-anchor: middle; }
.root { width: 412px; padding-left: 13px; }
.coords { flex: 1; border-right: 0; }
.cx { flex: 1; text-align: center; }
.cy { width: 44px; margin-right: 20px; }
.unit { width: 12px; color: #00007a; }

/* Taskbar */
.taskbar { display: flex; height: 50px; background: #101010; color: #fff; }
.taskbar button { width: 62px; height: 50px; padding-right: 3px; }
.taskbar button svg { width: 20px; height: 20px; }
.taskbar button .wide { width: 30px; height: 30px; }
.taskbar .running { background: #333; border-bottom: 3px solid #76b9ed; }
.taskbar .running .wide { height: 24px; }
.tray { flex: 1; display: flex; align-items: center; justify-content: flex-end; gap: 12px; }
.tray svg { fill: none; stroke: #fff; }
.t16 { width: 16px; height: 16px; }
.t20 { width: 20px; height: 20px; }
.ime, .ime-box { width: 18px; font: bold 18px/20px "Noto Sans CJK SC", sans-serif; }
.ime-box { margin-left: 6px; height: 19px; background: #fff; color: #000; font: 16px/18px "Noto Sans CJK SC", sans-serif; text-align: center; }
.clock { width: 88px; margin: 0 5px 0 4px; display: flex; flex-direction: column; text-align: center; font: 15px/23px "Open Sans", sans-serif; }
.peek { width: 5px; height: 50px; margin-left: 14px; border-left: 1px solid #555; }
```
